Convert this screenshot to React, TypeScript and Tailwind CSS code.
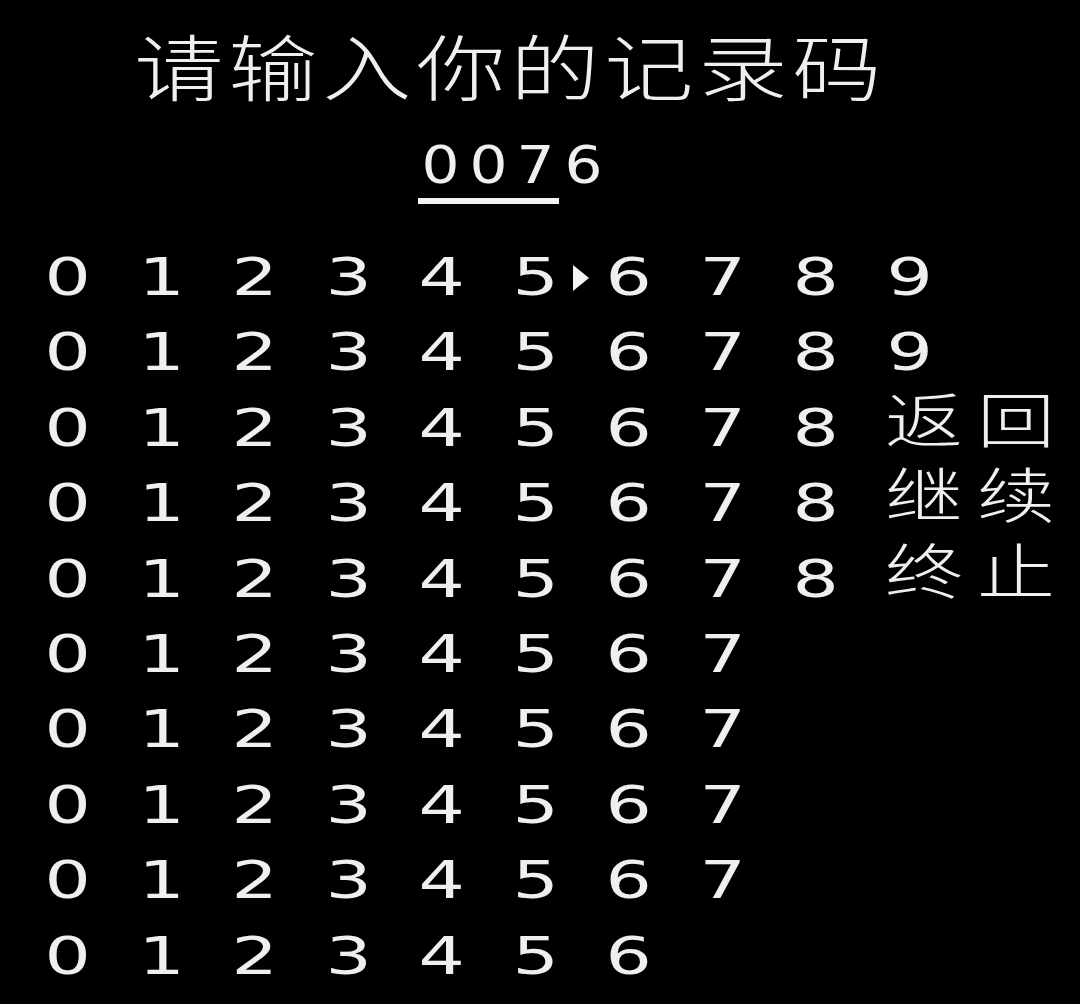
import React from 'react';

// Retro "enter your record code" password screen
const CJK = '"Noto Sans CJK SC", "Noto Sans CJK JP", sans-serif';
const DIGITS = '"DejaVu Sans", "Liberation Sans", sans-serif';

const TITLE = ['请', '输', '入', '你', '的', '记', '录', '码'];
const CODE = ['0', '0', '7', '6'];

// each row: how many digits, plus an optional menu label at the right
const ROWS: { count: number; label?: [string, string] }[] = [
  { count: 10 },
  { count: 10 },
  { count: 9, label: ['返', '回'] },
  { count: 9, label: ['继', '续'] },
  { count: 9, label: ['终', '止'] },
  { count: 8 },
  { count: 8 },
  { count: 8 },
  { count: 8 },
  { count: 7 },
];

const Digit = ({ value }: { value: string }) => (
  <span className="block w-[38px] text-center">
    <span className="inline-block scale-x-[1.4]">{value}</span>
  </span>
);

const Cursor = () => (
  <svg className="absolute left-[56px] top-[25px]" width="17" height="26" viewBox="0 0 17 26">
    <polygon points="0,0 16,13 0,26" fill="#f4f4f4" />
  </svg>
);

export default function App() {
  return (
    <div className="w-[1080px] h-[1004px] bg-black text-[#efefef] overflow-hidden select-none">
      {/* Title */}
      <div className="flex pl-[132px] pt-[28px] h-[100px] font-light" style={{ fontFamily: CJK }}>
        {TITLE.map((ch, i) => (
          <span key={i} className="w-[94px] text-center text-[72px] leading-[72px]">
            <span className="inline-block scale-x-[1.24]">{ch}</span>
          </span>
        ))}
      </div>

      {/* Entered code */}
      <div className="mt-[32px] pl-[417px]" style={{ fontFamily: DIGITS }}>
        <div className="flex h-[66px] text-[52px] leading-[66px]">
          {CODE.map((d, i) => (
            <span key={i} className="w-[47.5px] text-center">
              <span className="inline-block scale-x-[1.15]">{d}</span>
            </span>
          ))}
        </div>
        <div className="ml-[1px] w-[141px] h-[6px] bg-[#f4f4f4]" />
      </div>

      {/* Digit grid */}
      <div className="mt-[36px] pl-[49px] flex flex-col" style={{ fontFamily: DIGITS }}>
        {ROWS.map((row, r) => (
          <div key={r} className="flex items-start h-[75.4px] text-[52px] leading-[75.4px]">
            {Array.from({ length: row.count }).map((_, c) => (
              <div key={c} className="relative w-[93.5px] shrink-0">
                <Digit value={String(c)} />
                {r === 0 && c === 5 && <Cursor />}
              </div>
            ))}
            {row.label && (
              <div className="flex gap-[25px] font-light" style={{ fontFamily: CJK }}>
                {row.label.map((ch) => (
                  <span key={ch} className="w-[67px] h-[56px] text-center text-[60px] leading-[52px]">
                    <span className="inline-block scale-x-[1.3]">{ch}</span>
                  </span>
                ))}
              </div>
            )}
          </div>
        ))}
      </div>
    </div>
  );
}
